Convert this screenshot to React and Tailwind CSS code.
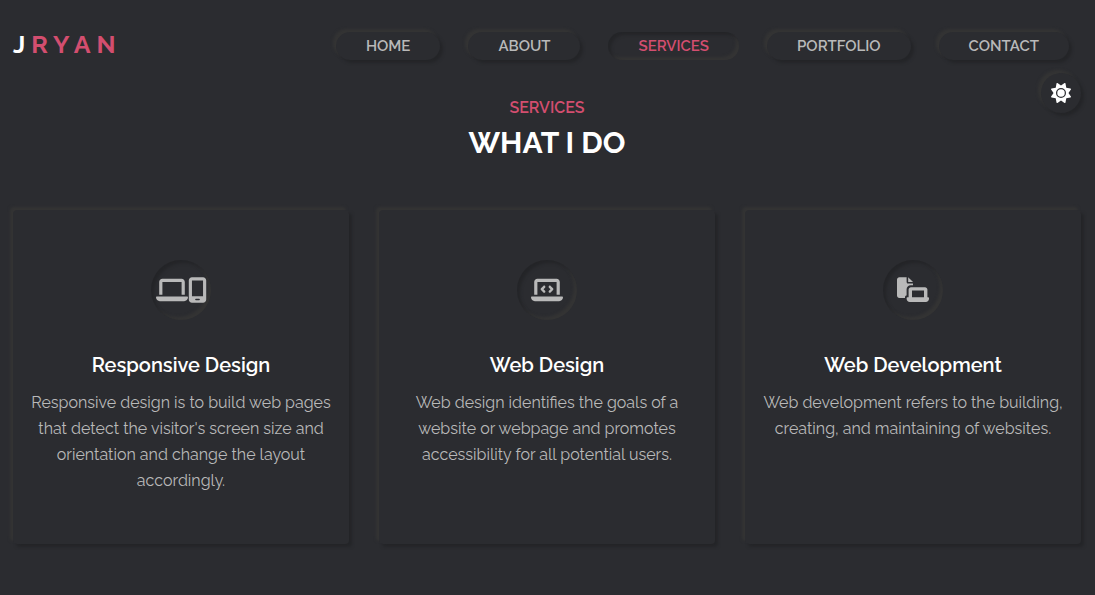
import React from "react";
import { FaLaptop, FaMobileScreen, FaLaptopCode, FaSun } from "react-icons/fa6";

const raised = "shadow-[3px_3px_3px_#242528,-3px_-3px_3px_#343434]";
const sunken = "shadow-[inset_3px_3px_3px_#242528,inset_-3px_-3px_3px_#343434]";

const links = ["Home", "About", "Services", "Portfolio", "Contact"];

function FileLaptopIcon({ className }) {
  return (
    <svg viewBox="0 0 640 512" fill="currentColor" aria-hidden="true" className={className}>
      <path d="M48 0H192V96c0 17.700 14.300 32 32 32H320v32H272c-44 0-80 36-80 80V368c-18 0-32 14-32 32v16H48c-26.500 0-48-21.500-48-48V48C0 21.500 21.500 0 48 0Z" />
      <path d="M224 0L320 96H224Z" />
      <path
        fillRule="evenodd"
        d="M280 200H560c26.500 0 48 21.500 48 48V400h16c8.800 0 16 7.200 16 16v16c0 35.300-28.700 64-64 64H256c-35.300 0-64-28.700-64-64v-16c0-8.800 7.200-16 16-16h24V248c0-26.500 21.500-48 48-48ZM300 268V400H540V268Z"
      />
    </svg>
  );
}

const services = [
  {
    title: "Responsive Design",
    icons: [
      { Icon: FaLaptop, size: "h-[26px] w-[32px]" },
      { Icon: FaMobileScreen, size: "h-[26px] w-[19px]" },
    ],
    text: "Responsive design is to build web pages that detect the visitor's screen size and orientation and change the layout accordingly.",
  },
  {
    title: "Web Design",
    icons: [{ Icon: FaLaptopCode, size: "h-[26px] w-[32px]" }],
    text: "Web design identifies the goals of a website or webpage and promotes accessibility for all potential users.",
  },
  {
    title: "Web Development",
    icons: [{ Icon: FileLaptopIcon, size: "h-[26px] w-[32px]" }],
    text: "Web development refers to the building, creating, and maintaining of websites.",
  },
];

function NavLink({ label, active }) {
  return (
    <a
      href={"#" + label.toLowerCase()}
      aria-current={active ? "page" : undefined}
      className={`rounded-full px-[30px] text-[15px] leading-7 font-semibold uppercase ${
        active ? `text-[#d34e6f] ${sunken}` : `text-[#b9b9b9] ${raised}`
      }`}
    >
      {label}
    </a>
  );
}

function ServiceCard({ title, icons, text }) {
  return (
    <article
      className={`flex min-h-[334px] flex-col items-center rounded-[4px] px-4 py-[50px] text-center ${raised}`}
    >
      <div
        className={`flex h-[60px] w-[60px] items-center justify-center rounded-full text-[#b9b9b9] ${sunken}`}
      >
        {icons.map(({ Icon, size }, i) => (
          <Icon key={i} className={`shrink-0 ${size}`} />
        ))}
      </div>
      <h3 className="mt-[30px] text-[20px] leading-[30px] font-semibold text-white">{title}</h3>
      <p className="mt-[10px] text-[16px] leading-[26px] text-[#b9b9b9]">{text}</p>
    </article>
  );
}

export default function App() {
  return (
    <div className="min-h-screen bg-[#2b2c30] pr-[14px] pb-12 pl-[13px] font-['Raleway','Lato',sans-serif]">
      <header className="relative flex items-start justify-between pt-[30px] pr-3">
        <a href="#home" className="text-[25px] leading-7 font-bold tracking-[6px] text-[#d34e6f]">
          <span className="text-white">J</span>RYAN
        </a>
        <nav className="flex gap-7 pt-[2px]">
          {links.map((l) => (
            <NavLink key={l} label={l} active={l === "Services"} />
          ))}
        </nav>
        <button
          type="button"
          aria-label="Toggle theme"
          className={`absolute top-[73px] right-0 flex h-10 w-10 items-center justify-center rounded-full text-[20px] text-white ${raised}`}
        >
          <FaSun />
        </button>
      </header>
      <main id="services">
        <div className="pt-[35px] text-center">
          <p className="text-[16px] leading-[26px] font-semibold text-[#d34e6f] uppercase">Services</p>
          <h2 className="text-[30px] leading-[43px] font-bold text-white uppercase">What I Do</h2>
        </div>
        <div className="mt-[46px] grid grid-cols-3 gap-[30px]">
          {services.map((s) => (
            <ServiceCard key={s.title} {...s} />
          ))}
        </div>
      </main>
    </div>
  );
}
